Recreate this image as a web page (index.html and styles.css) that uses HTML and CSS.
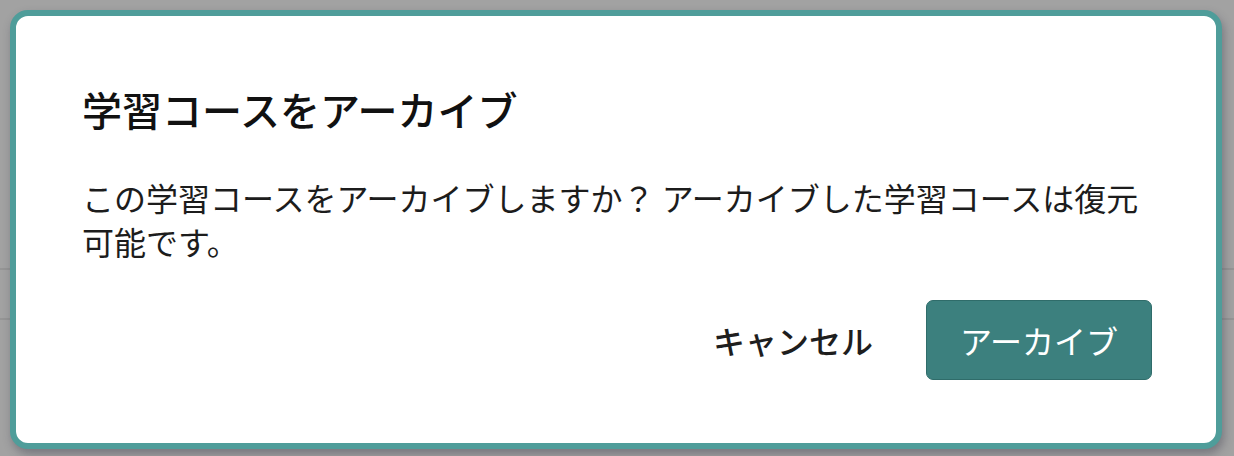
FILE: index.html
```html
<!DOCTYPE html>
<html lang="ja">
<head>
<meta charset="utf-8">
<title>学習コースをアーカイブ</title>
<link rel="stylesheet" href="styles.css">
</head>
<body>
<div class="page">
  <div class="page-band"></div>
  <div class="page-row"></div>
</div>
<div class="overlay">
  <div class="dialog" role="dialog" aria-labelledby="dlg-title">
    <h2 class="dialog-title" id="dlg-title">学習コースをアーカイブ</h2>
    <p class="dialog-text">この学習コースをアーカイブしますか？ アーカイブした学習コースは復元可能です。</p>
    <div class="dialog-actions">
      <button class="btn btn-text" type="button">キャンセル</button>
      <button class="btn btn-primary" type="button">アーカイブ</button>
    </div>
  </div>
</div>
</body>
</html>
```

FILE: styles.css
```css
html, body {
  margin: 0;
  padding: 0;
}
body {
  width: 1234px;
  height: 456px;
  overflow: hidden;
  background: #a2a2a2;
  font-family: "Noto Sans CJK JP", "Noto Sans", sans-serif;
}
.page {
  display: flex;
  flex-direction: column;
}
.page-band {
  box-sizing: border-box;
  height: 270px;
  border-bottom: 2px solid #959595;
}
.page-row {
  height: 48px;
  border-bottom: 2px solid #959595;
}
.overlay {
  position: absolute;
  left: 0;
  top: 0;
  width: 1234px;
  height: 456px;
}
.dialog {
  position: absolute;
  left: 10px;
  top: 10px;
  width: 1212px;
  height: 439px;
  box-sizing: border-box;
  background: #ffffff;
  border: 6px solid #4f9d9a;
  border-radius: 18px;
  box-shadow: 2px 5px 10px rgba(40, 40, 60, 0.35);
  padding: 67px 64px 63px 66px;
  display: flex;
  flex-direction: column;
}
.dialog-title {
  margin: 0;
  font-size: 40px;
  line-height: 52px;
  font-weight: 500;
  color: #111111;
}
.dialog-text {
  margin: 40px 0 0 0;
  font-size: 32px;
  line-height: 44px;
  font-weight: 400;
  color: #1c1c1c;
}
.dialog-actions {
  margin-top: 37px;
  display: flex;
  justify-content: flex-end;
  gap: 20px;
}
.btn {
  font-family: inherit;
  font-size: 32px;
  font-weight: 400;
  height: 80px;
  padding: 0 33px;
  border-radius: 7px;
  border: none;
  cursor: pointer;
}
.btn-text {
  background: transparent;
  color: #1e1e1e;
  font-weight: 500;
}
.btn-primary {
  background: #3c807e;
  color: #ffffff;
  border: 1px solid #2f6c6a;
}
```
